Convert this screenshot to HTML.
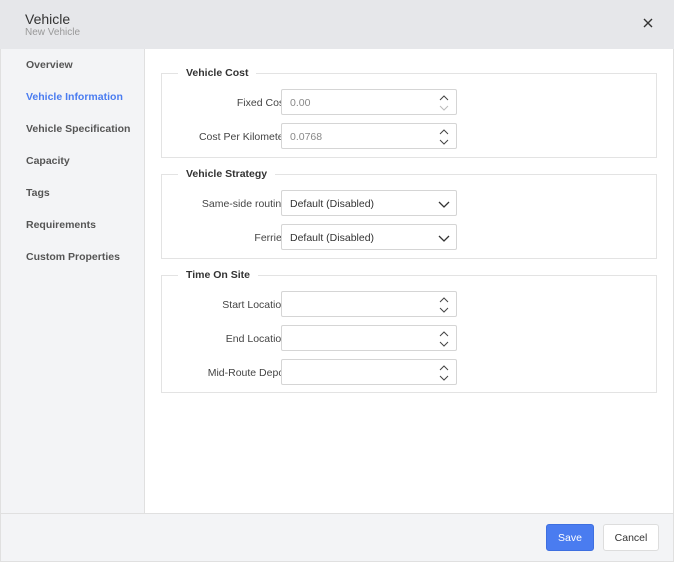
<!DOCTYPE html>
<html><head><style>
*{box-sizing:border-box;margin:0;padding:0}
body{width:674px;height:562px;font-family:"Liberation Sans",Arial,sans-serif;background:#fff;position:relative;overflow:hidden;color:#333}
.hdr{position:absolute;left:0;top:0;width:674px;height:49px;background:#e6e7ea}
.t1{position:absolute;left:25px;top:11px;font-size:14px;color:#333}
.t2{position:absolute;left:25px;top:27px;font-size:10px;color:#999}
.x{position:absolute;left:642px;top:17px}
.side{position:absolute;left:0;top:49px;width:145px;height:464px;background:#f3f4f6;border-right:1px solid #e0e0e0;border-left:1px solid #e0e0e0}
.side div{position:absolute;left:25px;font-size:10.5px;font-weight:bold;color:#555}
.foot{position:absolute;left:0;top:513px;width:674px;height:49px;background:#f3f4f6;border-top:1px solid #e0e0e0;border-left:1px solid #e0e0e0;border-right:1px solid #e0e0e0;border-bottom:1px solid #e0e0e0}
.rb{position:absolute;left:673px;top:49px;width:1px;height:464px;background:#e0e0e0}
.fs{position:absolute;left:161px;width:496px;border:1px solid #e3e3e3}
.lg{position:absolute;left:16px;top:-7px;background:#fff;padding:0 8px;font-size:10.5px;font-weight:bold;color:#333}
.lb{position:absolute;right:384px;font-size:10.5px;color:#444;text-align:right;white-space:nowrap}
.in{position:absolute;left:281px;width:176px;height:26px;border:1px solid #d5d5d5;border-radius:2px;background:#fff;font-size:10.5px;color:#888;padding:7px 8px}
.in svg{position:absolute;right:6px;top:4px}
.btn{position:absolute;top:524px;height:27px;border-radius:3px;font-size:10.5px;text-align:center;line-height:27px}
</style></head><body>
<div class="hdr"><div class="t1">Vehicle</div><div class="t2">New Vehicle</div>
<svg class="x" width="12" height="12" viewBox="0 0 12 12"><path d="M2 2L10 10M10 2L2 10" stroke="#333" stroke-width="1.4"/></svg></div>
<div class="side">
<div style="top:10px">Overview</div>
<div style="top:42px;color:#4a7cf0">Vehicle Information</div>
<div style="top:74px">Vehicle Specification</div>
<div style="top:106px">Capacity</div>
<div style="top:138px">Tags</div>
<div style="top:170px">Requirements</div>
<div style="top:202px">Custom Properties</div>
</div>
<div class="rb"></div>
<div class="fs" style="top:73px;height:85px"><div class="lg">Vehicle Cost</div></div>
<div class="fs" style="top:174px;height:85px"><div class="lg">Vehicle Strategy</div></div>
<div class="fs" style="top:275px;height:118px"><div class="lg">Time On Site</div></div>

<div class="lb" style="top:97px">Fixed Cost:</div>
<div class="in" style="top:89px">0.00<svg width="12" height="18" viewBox="0 0 12 18"><path d="M2 6L6 2L10 6" stroke="#444" fill="none"/><path d="M2 12L6 16L10 12" stroke="#bbb" fill="none"/></svg></div>
<div class="lb" style="top:131px">Cost Per Kilometer:</div>
<div class="in" style="top:123px">0.0768<svg width="12" height="18" viewBox="0 0 12 18"><path d="M2 6L6 2L10 6" stroke="#444" fill="none"/><path d="M2 12L6 16L10 12" stroke="#444" fill="none"/></svg></div>

<div class="lb" style="top:198px">Same-side routing:</div>
<div class="in" style="top:190px;color:#333">Default (Disabled)<svg width="12" height="18" viewBox="0 0 12 18"><path d="M1 7L6 12L11 7" stroke="#333" stroke-width="1.3" fill="none"/></svg></div>
<div class="lb" style="top:232px">Ferries:</div>
<div class="in" style="top:224px;color:#333">Default (Disabled)<svg width="12" height="18" viewBox="0 0 12 18"><path d="M1 7L6 12L11 7" stroke="#333" stroke-width="1.3" fill="none"/></svg></div>

<div class="lb" style="top:299px">Start Location:</div>
<div class="in" style="top:291px"><svg width="12" height="18" viewBox="0 0 12 18"><path d="M2 6L6 2L10 6" stroke="#444" fill="none"/><path d="M2 12L6 16L10 12" stroke="#444" fill="none"/></svg></div>
<div class="lb" style="top:333px">End Location:</div>
<div class="in" style="top:325px"><svg width="12" height="18" viewBox="0 0 12 18"><path d="M2 6L6 2L10 6" stroke="#444" fill="none"/><path d="M2 12L6 16L10 12" stroke="#444" fill="none"/></svg></div>
<div class="lb" style="top:367px">Mid-Route Depot:</div>
<div class="in" style="top:359px"><svg width="12" height="18" viewBox="0 0 12 18"><path d="M2 6L6 2L10 6" stroke="#444" fill="none"/><path d="M2 12L6 16L10 12" stroke="#444" fill="none"/></svg></div>

<div class="foot"></div>
<div class="btn" style="left:546px;width:48px;background:#4a7cf0;color:#fff;border:1px solid #3e6fe0">Save</div>
<div class="btn" style="left:603px;width:56px;background:#fff;color:#333;border:1px solid #ddd">Cancel</div>
</body></html>
